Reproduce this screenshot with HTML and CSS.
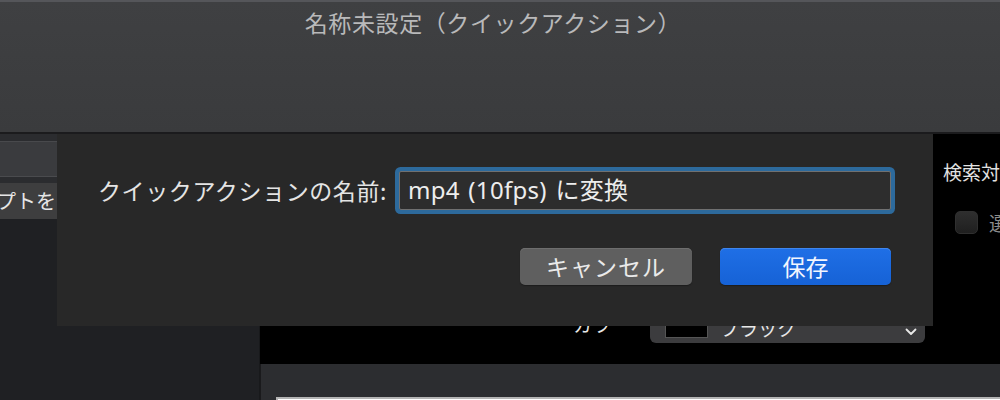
FILE: index.html
```html
<!DOCTYPE html>
<html lang="ja">
<head>
<meta charset="utf-8">
<link rel="stylesheet" href="styles.css">
</head>
<body>
<div class="window">
  <header class="titlebar">
    <div class="title">名称未設定（クイックアクション）</div>
  </header>
  <div class="content">
    <aside class="sidebar">
      <div class="search-strip"><div class="search-field"></div></div>
      <div class="side-row">スクリプトを</div>
    </aside>
    <main class="main">
      <section class="workflow">
        <div class="options">
          <div class="popup-row">
            <span class="popup-label">カラー</span>
            <div class="popup">
              <span class="swatch"></span>
              <span class="popup-text">ブラック</span>
              <svg class="chev" width="12" height="8" viewBox="0 0 12 8"><path d="M1.5 1.5 L6 6 L10.5 1.5" fill="none" stroke="#e8e8e8" stroke-width="1.8" stroke-linecap="round" stroke-linejoin="round"/></svg>
            </div>
          </div>
        </div>
        <div class="search-target">
          <div class="st-title">検索対象</div>
          <div class="st-check"><span class="checkbox"></span><span class="st-label">選択</span></div>
        </div>
      </section>
      <section class="lower">
        <div class="outline-box"></div>
      </section>
    </main>
  </div>

  <div class="sheet">
    <div class="name-row">
      <label class="name-label">クイックアクションの名前:</label>
      <div class="name-input">mp4 (10fps) に変換</div>
    </div>
    <div class="button-row">
      <button class="btn btn-cancel">キャンセル</button>
      <button class="btn btn-save">保存</button>
    </div>
  </div>
</div>
</body>
</html>
```

FILE: styles.css
```css
* { box-sizing: border-box; }
html, body {
  margin: 0;
  padding: 0;
  width: 1000px;
  height: 400px;
  overflow: hidden;
  background: #000;
  font-family: "Noto Sans CJK JP", "Noto Sans", sans-serif;
}
.window {
  position: relative;
  width: 1000px;
  height: 400px;
  display: flex;
  flex-direction: column;
  overflow: hidden;
}
.titlebar {
  height: 134px;
  flex: none;
  background: linear-gradient(#3f4042, #3a3b3d);
  border-top: 2px solid #55565a;
  border-bottom: 2px solid #1b1b1d;
  display: flex;
  justify-content: center;
}
.title {
  margin-top: 4px;
  margin-left: -14px;
  font-size: 23px;
  line-height: 32px;
  letter-spacing: 0.6px;
  color: #b9b9ba;
  white-space: nowrap;
}
.content {
  flex: 1;
  display: flex;
  min-height: 0;
  overflow: hidden;
}
.sidebar {
  width: 260px;
  flex: none;
  background: #1f2023;
  border-right: 1px solid #18191b;
  overflow: hidden;
}
.search-strip {
  background: #2b2c2f;
  padding: 7px 0 6px;
}
.search-field {
  height: 36px;
  background: #3a3b3e;
  border-top: 1px solid #48494c;
  border-bottom: 1px solid #4a4b4e;
}
.side-row {
  height: 36px;
  background: #3e3e3f;
  color: #e6e6e6;
  font-size: 20px;
  line-height: 36px;
  white-space: nowrap;
  text-indent: -64px;
}
.main {
  flex: 1;
  display: flex;
  flex-direction: column;
  min-width: 0;
  overflow: hidden;
}
.workflow {
  height: 230px;
  flex: none;
  background: #000;
  display: flex;
  overflow: hidden;
}
.options {
  width: 683px;
  flex: none;
  padding-top: 178px;
}
.popup-row {
  display: flex;
  align-items: flex-end;
}
.popup-label {
  width: 390px;
  text-align: right;
  padding-right: 20px;
  padding-bottom: 7px;
  color: #e8e8e8;
  font-size: 19px;
  line-height: 24px;
  white-space: nowrap;
}
.popup {
  width: 275px;
  height: 26px;
  background: #3c3c3e;
  border-radius: 0 0 6px 6px;
  display: flex;
  align-items: center;
  padding: 0 8px 0 15px;
}
.swatch {
  width: 43px;
  height: 18px;
  margin-bottom: 2px;
  background: #000;
  border: 1px solid #555;
}
.popup-text {
  margin-left: 12px;
  margin-bottom: 5px;
  color: #e8e8e8;
  font-size: 19px;
  line-height: 22px;
  flex: 1;
  white-space: nowrap;
}
.chev { flex: none; margin-top: 4px; }
.search-target {
  padding-top: 26px;
  white-space: nowrap;
}
.st-title {
  color: #e2e2e2;
  font-size: 19px;
  line-height: 24px;
}
.st-check {
  margin-top: 25px;
  margin-left: 12px;
  display: flex;
  align-items: center;
  gap: 11px;
}
.checkbox {
  width: 23px;
  height: 23px;
  border-radius: 5px;
  background: linear-gradient(#2e2e2e, #1f1f1f);
  border: 1px solid #2f2f2f;
}
.st-label {
  color: #8c8c8c;
  font-size: 19px;
}
.lower {
  flex: 1;
  background: #2c2d30;
  border-left: 1px solid #1a1a1c;
  padding: 33px 0 0 15px;
  overflow: hidden;
}
.outline-box {
  height: 20px;
  border: 2px solid #b4b4b4;
  border-right: none;
  background: #fff;
}
.sheet {
  position: absolute;
  left: 57px;
  top: 134px;
  width: 876px;
  height: 192px;
  background: #282828;
  padding: 33px 42px 0 41px;
  display: flex;
  flex-direction: column;
}
.name-row {
  display: flex;
  align-items: center;
}
.name-label {
  width: 301px;
  flex: none;
  color: #e4e4e4;
  font-size: 23px;
  line-height: 47px;
  white-space: nowrap;
  letter-spacing: 0.6px;
}
.name-input {
  width: 495px;
  height: 39px;
  margin: 4px 0;
  background: #2d2d2d;
  border: 1px solid #707070;
  border-radius: 2px;
  box-shadow: 0 0 0 4px #2d6a9c;
  color: #ededed;
  font-family: "Noto Sans", "Noto Sans CJK JP", sans-serif;
  font-size: 24px;
  line-height: 36px;
  letter-spacing: 0.3px;
  word-spacing: 2px;
  padding-left: 8px;
  white-space: nowrap;
}
.button-row {
  margin-top: 34px;
  display: flex;
  justify-content: flex-end;
  gap: 28px;
}
.btn {
  height: 37px;
  border: none;
  border-radius: 5px;
  font-family: inherit;
  font-size: 23px;
  line-height: 37px;
  padding: 0;
  color: #eaeaea;
}
.btn-cancel {
  width: 172px;
  background: #5f5f5f;
  letter-spacing: 1px;
  box-shadow: inset 0 1px 0 #6e6e6e, 0 1px 1px #1c1c1c;
}
.btn-save {
  width: 171px;
  background: linear-gradient(#1f6fe6, #1662d6);
  box-shadow: inset 0 1px 0 #3f86ee, 0 1px 1px #1c1c1c;
  color: #f2f6ff;
}
```
